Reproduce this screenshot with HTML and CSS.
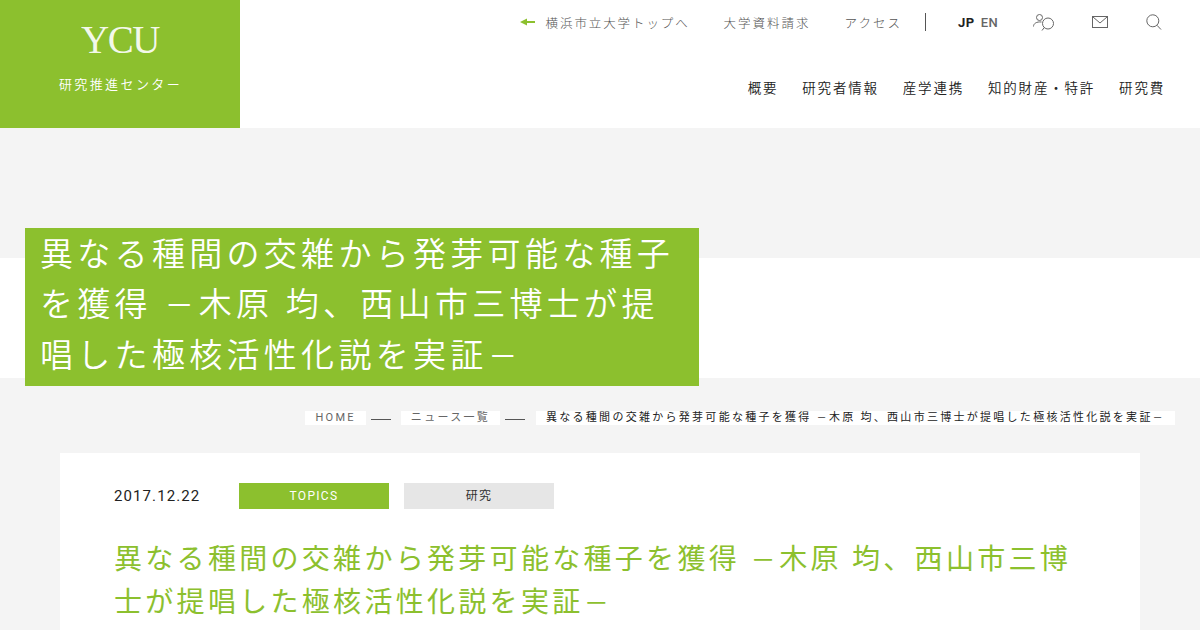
FILE: index.html
```html
<!DOCTYPE html>
<html lang="ja">
<head>
<meta charset="utf-8">
<title>YCU</title>
<link rel="stylesheet" href="styles.css">
</head>
<body>
<header class="site-header">
  <a class="logo">
    <span class="logo-mark">YCU</span>
    <span class="logo-sub">研究推進センター</span>
  </a>
  <div class="header-nav">
    <div class="util-row">
      <a class="util-link util-top"><svg class="arrow" width="15" height="8" viewBox="0 0 15 8"><path d="M0 4 L7 0.500 V3 H15 V5 H7 V7.500 Z" fill="#8cc02e"/></svg>横浜市立大学トップへ</a>
      <a class="util-link">大学資料請求</a>
      <a class="util-link util-access">アクセス</a>
      <div class="lang"><b>JP</b><span>EN</span></div>
      <svg class="ico ico-person" width="22" height="17" viewBox="0 0 22 17" fill="none" stroke="#666" stroke-width="1"><circle cx="6.500" cy="3.500" r="3"/><path d="M0.500 12.500 C0.500 9.500 3.500 7.500 8.500 8"/><circle cx="15" cy="9.500" r="5.500"/><path d="M11.300 13.500 L9 16.500"/></svg>
      <svg class="ico ico-mail" width="16" height="12" viewBox="0 0 16 12" fill="none" stroke="#666" stroke-width="1"><rect x="0.500" y="0.500" width="15" height="11"/><path d="M1 1 L8 7 L15 1"/></svg>
      <svg class="ico ico-search" width="16" height="16" viewBox="0 0 16 16" fill="none" stroke="#666" stroke-width="1"><circle cx="6.800" cy="6.800" r="6"/><path d="M11 11.300 L15 15.500"/></svg>
    </div>
    <nav class="main-nav">
      <a>概要</a><a>研究者情報</a><a>産学連携</a><a>知的財産・特許</a><a>研究費</a>
    </nav>
  </div>
</header>
<main class="page">
  <section class="hero">
    <h1 class="hero-title"><span class="line">異なる種間の交雑から発芽可能な種子</span><span class="line">を獲得 <span class="dash">－</span>木原 均、西山市三博士が提</span><span class="line">唱した極核活性化説を実証<span class="dash">－</span></span></h1>
  </section>
  <div class="crumbs">
    <a class="crumb muted">HOME</a><i class="sep sep-first"></i>
    <a class="crumb muted">ニュース一覧</a><i class="sep"></i>
    <span class="crumb">異なる種間の交雑から発芽可能な種子を獲得 <span class="dash">－</span>木原 均、西山市三博士が提唱した極核活性化説を実証<span class="dash">－</span></span>
  </div>
  <article class="card">
    <div class="meta">
      <time>2017.12.22</time>
      <span class="tag tag-green">TOPICS</span>
      <span class="tag tag-gray">研究</span>
    </div>
    <h2 class="card-title"><span class="line">異なる種間の交雑から発芽可能な種子を獲得 <span class="dash">－</span>木原 均、西山市三博</span><span class="line">士が提唱した極核活性化説を実証<span class="dash">－</span></span></h2>
  </article>
</main>
</body>
</html>
```
FILE: styles.css
```css
* { box-sizing: border-box; }
html, body { margin: 0; height: 630px; overflow: hidden; }
body {
  background: #f4f4f4;
  font-family: Roboto, "Noto Sans CJK JP", sans-serif;
  font-weight: 300;
  color: #222;
}
.line { display: block; white-space: nowrap; }
.dash { font-size: .88em; font-weight: 400; padding: 0 .02em; }
.site-header {
  display: flex;
  justify-content: space-between;
  height: 128px;
  background: #fff;
}
.logo {
  width: 240px;
  background: #8cc02e;
  color: #fff;
  display: flex;
  flex-direction: column;
  align-items: center;
  padding-top: 19px;
}
.logo-mark {
  font-family: "Liberation Serif", serif;
  font-size: 39px;
  line-height: 42px;
  letter-spacing: -1.500px;
  opacity: .9;
}
.logo-sub {
  margin-top: 14px;
  margin-left: 1px;
  font-size: 13px;
  font-weight: 350;
  line-height: 20px;
  letter-spacing: 2.400px;
}
.header-nav {
  display: flex;
  flex-direction: column;
  align-items: flex-end;
  padding-right: 35px;
}
.util-row {
  display: flex;
  align-items: center;
  height: 46px;
  padding-bottom: 2px;
  color: #555;
  font-size: 12.500px;
  letter-spacing: 2px;
}
.util-link { display: flex; align-items: center; margin-right: 34px; }
.util-top { letter-spacing: 1.900px; }
.arrow { margin-right: 11px; }
.util-access { margin-right: 23px; }
.lang {
  border-left: 1px solid #555;
  height: 18px;
  padding-left: 32px;
  display: flex;
  align-items: center;
  gap: 6px;
  font-size: 13px;
  letter-spacing: .5px;
  width: 108px;
}
.lang b { color: #222; font-weight: 700; }
.lang span { color: #666; font-weight: 500; }
.ico { display: block; flex: none; }
.ico-mail { margin-left: 37px; }
.ico-search { margin-left: 38px; margin-right: 3px; }
.main-nav {
  display: flex;
  gap: 24px;
  margin-top: 32px;
  font-size: 13.500px;
  font-weight: 350;
  line-height: 20px;
  letter-spacing: 1.800px;
  color: #222;
}
.page { position: relative; }
.hero { position: relative; height: 258px; }
.hero::after {
  content: "";
  display: block;
  height: 120px;
  background: #fff;
  position: absolute;
  left: 0;
  right: 0;
  top: 130px;
}
.hero-title {
  position: absolute;
  z-index: 1;
  left: 25px;
  top: 100px;
  width: 674px;
  height: 158px;
  margin: 0;
  padding: 2px 14px 2px 15px;
  background: #8cc02e;
  color: #fff;
  font-size: 33px;
  font-weight: 350;
  line-height: 50px;
  letter-spacing: 4.300px;
}
.crumbs {
  display: flex;
  justify-content: flex-end;
  align-items: center;
  padding: 4px 25px 0 0;
  height: 60px;
  font-size: 11px;
  font-weight: 400;
  letter-spacing: 2.280px;
}
.crumb {
  background: #fff;
  height: 14px;
  line-height: 14px;
  padding: 0 10px;
  white-space: nowrap;
}
.muted { color: #666; }
.sep { display: block; width: 20px; height: 1px; margin: 2px 11px 0 5px; background: #555; }
.sep-first { margin-right: 10px; }
.card {
  margin: 7px 60px 0;
  background: #fff;
  padding: 30px 55px;
  height: 300px;
}
.meta { display: flex; align-items: center; height: 26px; }
.meta time { width: 125px; font-size: 15px; font-weight: 400; letter-spacing: 1.100px; color: #222; margin-left: -1px; }
.tag {
  width: 150px;
  height: 26px;
  line-height: 26px;
  text-align: center;
  font-size: 12px;
  font-weight: 400;
  letter-spacing: 1.300px;
}
.tag-green { background: #8cc02e; color: #fff; }
.tag-gray { background: #e6e6e6; color: #333; margin-left: 15px; }
.card-title {
  margin: 30px 0 0 -1px;
  color: #8cc02e;
  font-size: 28px;
  font-weight: 400;
  line-height: 42px;
  letter-spacing: 3.300px;
}
```
